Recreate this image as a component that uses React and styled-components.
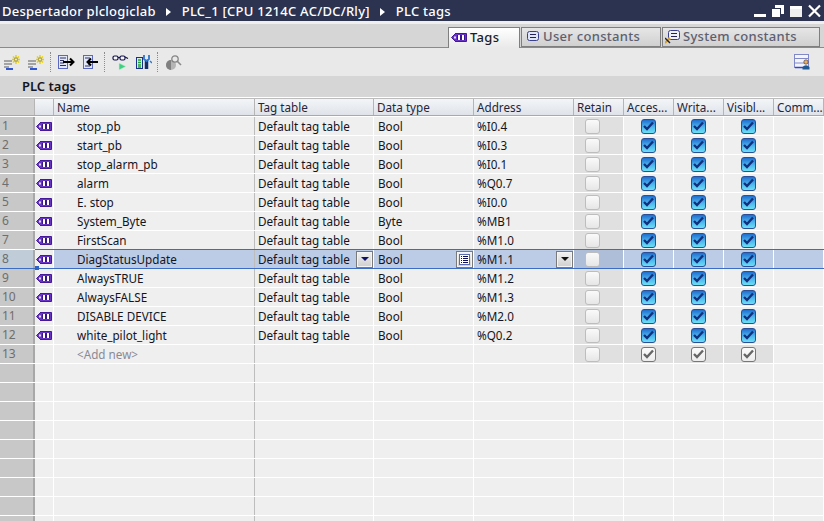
import React from "react";
import styled, { createGlobalStyle } from "styled-components";

const GlobalStyle = createGlobalStyle`
  html, body { margin: 0; padding: 0; background: #efefef; overflow: hidden; }
  * { box-sizing: border-box; }
`;

const FONT = `"Noto Sans", "Liberation Sans", sans-serif`;
const COLUMNS = "35px 19px 201px 119px 100px 100px 50px 50px 50px 50px 50px";

const tags = [
  ["stop_pb", "Bool", "%I0.4"],
  ["start_pb", "Bool", "%I0.3"],
  ["stop_alarm_pb", "Bool", "%I0.1"],
  ["alarm", "Bool", "%Q0.7"],
  ["E. stop", "Bool", "%I0.0"],
  ["System_Byte", "Byte", "%MB1"],
  ["FirstScan", "Bool", "%M1.0"],
  ["DiagStatusUpdate", "Bool", "%M1.1"],
  ["AlwaysTRUE", "Bool", "%M1.2"],
  ["AlwaysFALSE", "Bool", "%M1.3"],
  ["DISABLE DEVICE", "Bool", "%M2.0"],
  ["white_pilot_light", "Bool", "%Q0.2"],
];

const Page = styled.div`
  width: 824px;
  height: 521px;
  overflow: hidden;
  display: flex;
  flex-direction: column;
  font-family: ${FONT};
  background: #efefef;
  & > * { flex-shrink: 0; }
`;

const TitleBar = styled.div`
  height: 21px;
  background: #2b3350;
  color: #fff;
  display: flex;
  align-items: center;
  padding-left: 2px;
  font-size: 13px;
  letter-spacing: 0.25px;
  font-weight: 500;
  white-space: nowrap;
`;

const Crumb = styled.span`
  &:not(:first-child)::before {
    content: "";
    display: inline-block;
    border-left: 5px solid #fff;
    border-top: 4px solid transparent;
    border-bottom: 4px solid transparent;
    margin: 0 11px 0 10px;
  }
`;

const WindowButtons = styled.div`
  margin-left: auto;
  display: flex;
  align-items: center;
  gap: 5px;
  padding-right: 3px;
`;

const TabStrip = styled.div`
  margin-top: 3px;
  height: 24px;
  background: #d6d6d6;
  display: flex;
  justify-content: flex-end;
  align-items: flex-end;
  gap: 1px;
  padding-right: 4px;
  border-bottom: 1px solid #8a8a8a;
`;

const Tab = styled.div`
  width: ${(p) => p.$w}px;
  height: ${(p) => (p.$active ? 21 : 20)}px;
  margin-bottom: ${(p) => (p.$active ? -1 : 0)}px;
  border: 1px solid #7f7f7f;
  border-bottom: ${(p) => (p.$active ? "none" : "1px solid #7f7f7f")};
  background: ${(p) => (p.$active ? "linear-gradient(#ffffff, #e9e9e9)" : "linear-gradient(#e6e6e6, #d0d0d0)")};
  color: ${(p) => (p.$active ? "#1c1c28" : "#5d6070")};
  font-size: 13px;
  font-weight: 500;
  letter-spacing: 0.3px;
  display: flex;
  align-items: center;
  gap: 3px;
  padding: 0 0 2px ${(p) => p.$pad}px;
  white-space: nowrap;
`;

const Toolbar = styled.div`
  height: 28px;
  background: #e9e9e9;
  display: flex;
  align-items: center;
  padding: 0 13px 0 4px;
`;

const ToolGroup = styled.div`
  display: flex;
  align-items: center;
  gap: 7px;
  padding: 0 5px 0 0;
  margin-right: 7px;
  height: 20px;
  border-right: 1px dotted #8c8c8c;
  &:nth-last-child(2) { border-right: none; }
`;

const RightTool = styled.div`
  margin-left: auto;
  display: flex;
`;

const SectionTitle = styled.div`
  height: 22px;
  background: #d6d6d6;
  color: #14141e;
  font-size: 13px;
  font-weight: 600;
  padding-left: 22px;
  line-height: 20px;
  border-bottom: 1px solid #fff;
`;

const HeaderRow = styled.div`
  display: grid;
  grid-template-columns: ${COLUMNS};
  height: 18px;
  margin-bottom: 1px;
  background: linear-gradient(#f3f5f8, #dfe3e9);
  border-top: 1px solid #bcbcbc;
  border-bottom: 1px solid #a9a9a9;
  box-shadow: 0 1px 0 #fff;
`;

const HeaderCell = styled.div`
  border-right: 1px solid #b5b5b5;
  padding-left: 3px;
  font-size: 11.7px;
  line-height: 16px;
  color: #25253a;
  white-space: nowrap;
  overflow: hidden;
  background: ${(p) => (p.$gutter ? "#d0d0d0" : "transparent")};
`;

const Row = styled.div`
  display: grid;
  grid-template-columns: ${COLUMNS};
  height: 19px;
  position: relative;
  border-bottom: 1px solid ${(p) => (p.$selected ? "#3b6dc4" : "#fff")};
  background: #efefef;
  ${(p) => p.$selected && "box-shadow: 35px -1px 0 #3b6dc4; z-index: 1;"}
`;

const NumberCell = styled.div`
  background: ${(p) => (p.$selected ? "#c0cdd8" : "#c8c8c8")};
  border-right: 2px solid #a8a8a8;
  color: #6e6e6e;
  font-size: 12px;
  line-height: 18px;
  padding-left: 2px;
`;

const IconCell = styled.div`
  display: flex;
  align-items: center;
  justify-content: center;
  border-right: 1px solid #fff;
  background: #efefef;
`;

const Cell = styled.div`
  border-right: 1px solid ${(p) => (p.$strong ? "#bdbdbd" : "#fff")};
  padding-left: ${(p) => p.$pad ?? 3}px;
  font-size: 11.7px;
  line-height: 18px;
  color: ${(p) => (p.$muted ? "#8a8a96" : "#14141c")};
  background: ${(p) => (p.$selected ? "#bdcce6" : "transparent")};
  display: flex;
  align-items: center;
  justify-content: space-between;
  white-space: nowrap;
  overflow: hidden;
`;

const CheckCell = styled.div`
  border-right: 1px solid #fff;
  background: ${(p) => p.$bg};
  display: flex;
  align-items: center;
  justify-content: ${(p) => (p.$retain ? "flex-start" : "center")};
  padding-left: ${(p) => (p.$retain ? 11 : 0)}px;
`;

const Check = styled.div`
  width: 15px;
  height: 15px;
  border-radius: 3px;
  display: flex;
  align-items: center;
  justify-content: center;
  ${(p) =>
    p.$kind === "on"
      ? "border: 1px solid #2a4f96; background: linear-gradient(#1f6fd0 0%, #4fb6ee 55%, #6be0f4 100%);"
      : p.$kind === "grey"
      ? "border: 1px solid #777; background: linear-gradient(#fbfbfb, #ececec);"
      : "border: 1px solid #bdbdbd; background: linear-gradient(#fafafa, #e6e6e6);"}
`;

const DropButton = styled.div`
  width: 17px;
  height: 17px;
  border: 1px solid #7a7a7a;
  box-shadow: inset 0 0 0 1px #f4f4f4;
  background: linear-gradient(#f2f2f2, #cfcfcf);
  display: flex;
  align-items: center;
  justify-content: center;
  flex-shrink: 0;
`;

const Arrow = styled.span`
  border-top: 4px solid ${(p) => p.$color};
  border-left: 4px solid transparent;
  border-right: 4px solid transparent;
`;

const FocusHandle = styled.span`
  position: absolute;
  left: 35px;
  bottom: -2px;
  width: 4px;
  height: 4px;
  background: #2a62c8;
`;

const TagIcon = () => (
  <svg width="16" height="11" viewBox="0 0 16 11">
    <path d="M0.5 5.5 L5 1 V1.5 H15.5 V9.5 H5 V10 Z" fill="#6a34c8" stroke="#45189a" />
    <rect x="6" y="3" width="8" height="5" fill="#3a1488" />
    <rect x="7" y="3" width="2" height="5" fill="#fff" />
    <rect x="11" y="3" width="2" height="5" fill="#fff" />
    <rect x="3" y="4.5" width="2" height="2" fill="#e8dcff" />
  </svg>
);

const TickIcon = ({ color }) => (
  <svg width="11" height="10" viewBox="0 0 11 10">
    <path d="M1 5 L4 8 L10 1.5" fill="none" stroke={color} strokeWidth="2.4" />
  </svg>
);

const ConstIcon = () => (
  <svg width="14" height="12" viewBox="0 0 14 12">
    <rect x="1.5" y="1.5" width="11" height="9" rx="2" fill="#dfe6f6" stroke="#3a3f8f" />
    <path d="M4 4.5 H10 M4 7.5 H10" stroke="#23235a" />
  </svg>
);

const SysConstIcon = () => (
  <svg width="15" height="16" viewBox="0 0 15 16">
    <rect x="3.5" y="2.5" width="11" height="9" rx="2" fill="#eef1fa" stroke="#3a3f8f" />
    <path d="M6 5.5 H12 M6 8.5 H12" stroke="#23235a" />
    <path d="M0 15 L5 10" stroke="#d8a020" strokeWidth="2" />
    <path d="M0 10 L5 15" stroke="#20203a" strokeWidth="1.5" />
  </svg>
);

const NewIcon = () => (
  <svg width="17" height="15" viewBox="0 0 17 15">
    <path d="M0 6 H8 M0 9 H8 M0 12 H5" stroke="#8c8c8c" strokeWidth="1.6" />
    <path d="M2 14 H9" stroke="#2f55d0" strokeWidth="2" />
    <path d="M12 0 V9 M8 4.5 H16 M9 1.5 L15 7.5 M15 1.5 L9 7.5" stroke="#e8d000" strokeWidth="1.4" />
    <circle cx="12" cy="4.5" r="1.6" fill="#f8f080" stroke="#50508a" strokeWidth="0.5" />
  </svg>
);

const MoveIcon = ({ flip }) => (
  <svg width="17" height="15" viewBox="0 0 17 15">
    <rect x={flip ? 1.5 : 0.5} y="0.5" width="9" height="13" fill="#e2e8fa" stroke="#5a68c0" />
    <path d={flip ? "M3 3 H8 M6 6 H8 M6 9 H8 M3 11 H8" : "M2 3 H8 M2 5.5 H6 M2 8 H6 M2 10.5 H8"} stroke="#30305a" />
    {flip ? (
      <path d="M16 7 H6 M9 3.5 L5.5 7 L9 10.5" stroke="#000" strokeWidth="2" fill="none" />
    ) : (
      <path d="M5 7 H15 M12 3.5 L15.5 7 L12 10.5" stroke="#000" strokeWidth="2" fill="none" />
    )}
  </svg>
);

const MonitorIcon = () => (
  <svg width="17" height="17" viewBox="0 0 17 17">
    <rect x="1" y="2" width="5" height="4" rx="1.5" fill="#f6f6f6" stroke="#10104a" strokeWidth="1.2" />
    <rect x="8" y="2" width="5" height="4" rx="1.5" fill="#f6f6f6" stroke="#10104a" strokeWidth="1.2" />
    <path d="M6 3.5 H8 M13 3 L16 4.5" stroke="#10104a" strokeWidth="1.1" />
    <path d="M7 9 L14 12.5 L7 16 Z" fill="#3ed080" stroke="#cfeeda" strokeWidth="0.6" />
  </svg>
);

const ConfigIcon = () => (
  <svg width="16" height="16" viewBox="0 0 16 16">
    <rect x="0.5" y="3.5" width="6" height="11" fill="#d8f0d8" stroke="#18308a" />
    <path d="M2 6 H5 M2 8.5 H5 M2 11 H5 M2 13 H5" stroke="#20a040" strokeWidth="1.4" />
    <path d="M10.5 6 V15" stroke="#16306a" strokeWidth="3.5" />
    <path d="M8 1 V5 L10.5 7 L13 5 V1" fill="none" stroke="#2a78d0" strokeWidth="1.8" />
    <path d="M14 7 L16 9" stroke="#2a78d0" strokeWidth="1.4" />
  </svg>
);

const SearchGreyIcon = () => (
  <svg width="17" height="17" viewBox="0 0 17 17">
    <circle cx="6" cy="11" r="5" fill="#b5b5b5" />
    <path d="M6 6 A5 5 0 0 0 6 16 Z" fill="#808080" />
    <circle cx="10" cy="5" r="3.2" fill="#e8e8e8" stroke="#858585" strokeWidth="1.3" />
    <path d="M12.5 7.5 L16 11" stroke="#8a8a8a" strokeWidth="1.6" />
  </svg>
);

const UserTableIcon = () => (
  <svg width="17" height="16" viewBox="0 0 17 16">
    <rect x="0.5" y="0.5" width="14" height="13" fill="#f4f4fb" stroke="#8088c8" />
    <path d="M1 4.5 H14 M1 9 H14" stroke="#8088c8" />
    <path d="M1 13.5 H10" stroke="#3048d0" strokeWidth="1.5" />
    <circle cx="12" cy="8" r="2.2" fill="#e8b060" stroke="#303040" strokeWidth="0.6" />
    <path d="M8.5 15.5 V13 Q12 9.5 15.5 13 V15.5 Z" fill="#1f5a92" />
  </svg>
);

const ListIcon = () => (
  <svg width="11" height="11" viewBox="0 0 11 11">
    <rect x="0.5" y="0.5" width="10" height="10" fill="#fff" stroke="#5a6ab0" />
    <path d="M2 2.5 H3 M4 2.5 H9 M2 4.5 H3 M4 4.5 H9 M2 6.5 H3 M4 6.5 H9 M2 8.5 H3 M4 8.5 H9" stroke="#10105a" />
  </svg>
);

const WinMin = () => (
  <svg width="12" height="14" viewBox="0 0 12 14"><rect x="0" y="10" width="12" height="3" fill="#fff" /></svg>
);
const WinRestore = () => (
  <svg width="14" height="14" viewBox="0 0 14 14">
    <path d="M4 1 H13 V10 H10 V4 H4 Z" fill="#fff" />
    <rect x="1" y="5" width="8" height="8" fill="#fff" />
  </svg>
);
const WinMax = () => (
  <svg width="13" height="14" viewBox="0 0 13 14">
    <rect x="0" y="2" width="12" height="3" fill="#fff" />
    <rect x="0" y="5" width="12" height="8" fill="#f0f0f0" />
  </svg>
);
const WinClose = () => (
  <svg width="13" height="14" viewBox="0 0 13 14">
    <path d="M1 1.5 L12 12.5 M12 1.5 L1 12.5" stroke="#fff" strokeWidth="2.2" />
  </svg>
);

const Checks = ({ kind, selected, grey }) => {
  const retainBg = selected ? "#aebdd8" : "#e0e0e0";
  const cellBg = selected ? "#bdcce6" : grey ? "#e0e0e0" : "transparent";
  return (
    <>
      <CheckCell $retain $bg={retainBg}>
        <Check $kind="off" />
      </CheckCell>
      {[0, 1, 2].map((i) => (
        <CheckCell key={i} $bg={cellBg}>
          <Check $kind={kind}>
            <TickIcon color={kind === "on" ? "#12307e" : "#666"} />
          </Check>
        </CheckCell>
      ))}
    </>
  );
};

function TagRow({ index, tag }) {
  const selected = index === 8;
  return (
    <Row $selected={selected}>
      <NumberCell $selected={selected}>{index}</NumberCell>
      <IconCell>
        <TagIcon />
      </IconCell>
      <Cell $pad={23} $strong $selected={selected}>{tag[0]}</Cell>
      <Cell $selected={selected}>
        Default tag table
        {selected && (
          <DropButton>
            <Arrow $color="#10106a" />
          </DropButton>
        )}
      </Cell>
      <Cell $pad={4} $selected={selected}>
        {tag[1]}
        {selected && (
          <DropButton>
            <ListIcon />
          </DropButton>
        )}
      </Cell>
      <Cell $selected={selected}>
        {tag[2]}
        {selected && (
          <DropButton>
            <Arrow $color="#111" />
          </DropButton>
        )}
      </Cell>
      <Checks kind="on" selected={selected} />
      <Cell $selected={selected} />
      {selected && <FocusHandle />}
    </Row>
  );
}

function EmptyRow() {
  return (
    <Row>
      <NumberCell />
      <IconCell />
      <Cell $strong />
      <Cell />
      <Cell />
      <Cell />
      <Cell />
      <Cell />
      <Cell />
      <Cell />
      <Cell />
    </Row>
  );
}

export default function App() {
  const headers = ["Name", "Tag table", "Data type", "Address", "Retain", "Acces...", "Writa...", "Visibl...", "Comm..."];
  return (
    <Page>
      <GlobalStyle />
      <TitleBar>
        <Crumb>Despertador plclogiclab</Crumb>
        <Crumb>PLC_1 [CPU 1214C AC/DC/Rly]</Crumb>
        <Crumb>PLC tags</Crumb>
        <WindowButtons>
          <WinMin />
          <WinRestore />
          <WinMax />
          <WinClose />
        </WindowButtons>
      </TitleBar>
      <TabStrip>
        <Tab $active $w={72} $pad={2}>
          <TagIcon />
          Tags
        </Tab>
        <Tab $w={140} $pad={4}>
          <ConstIcon />
          User constants
        </Tab>
        <Tab $w={158} $pad={2}>
          <SysConstIcon />
          System constants
        </Tab>
      </TabStrip>
      <Toolbar>
        <ToolGroup>
          <NewIcon />
          <NewIcon />
        </ToolGroup>
        <ToolGroup>
          <MoveIcon />
          <MoveIcon flip />
        </ToolGroup>
        <ToolGroup>
          <MonitorIcon />
          <ConfigIcon />
        </ToolGroup>
        <ToolGroup>
          <SearchGreyIcon />
        </ToolGroup>
        <RightTool>
          <UserTableIcon />
        </RightTool>
      </Toolbar>
      <SectionTitle>PLC tags</SectionTitle>
      <HeaderRow>
        <HeaderCell $gutter />
        <HeaderCell />
        {headers.map((h) => (
          <HeaderCell key={h}>{h}</HeaderCell>
        ))}
      </HeaderRow>
      {tags.map((tag, i) => (
        <TagRow key={tag[0]} index={i + 1} tag={tag} />
      ))}
      <Row>
        <NumberCell>13</NumberCell>
        <IconCell />
        <Cell $pad={23} $strong $muted>&lt;Add new&gt;</Cell>
        <Cell />
        <Cell />
        <Cell />
        <Checks kind="grey" grey />
        <Cell />
      </Row>
      {Array.from({ length: 9 }, (_, i) => (
        <EmptyRow key={i} />
      ))}
    </Page>
  );
}
